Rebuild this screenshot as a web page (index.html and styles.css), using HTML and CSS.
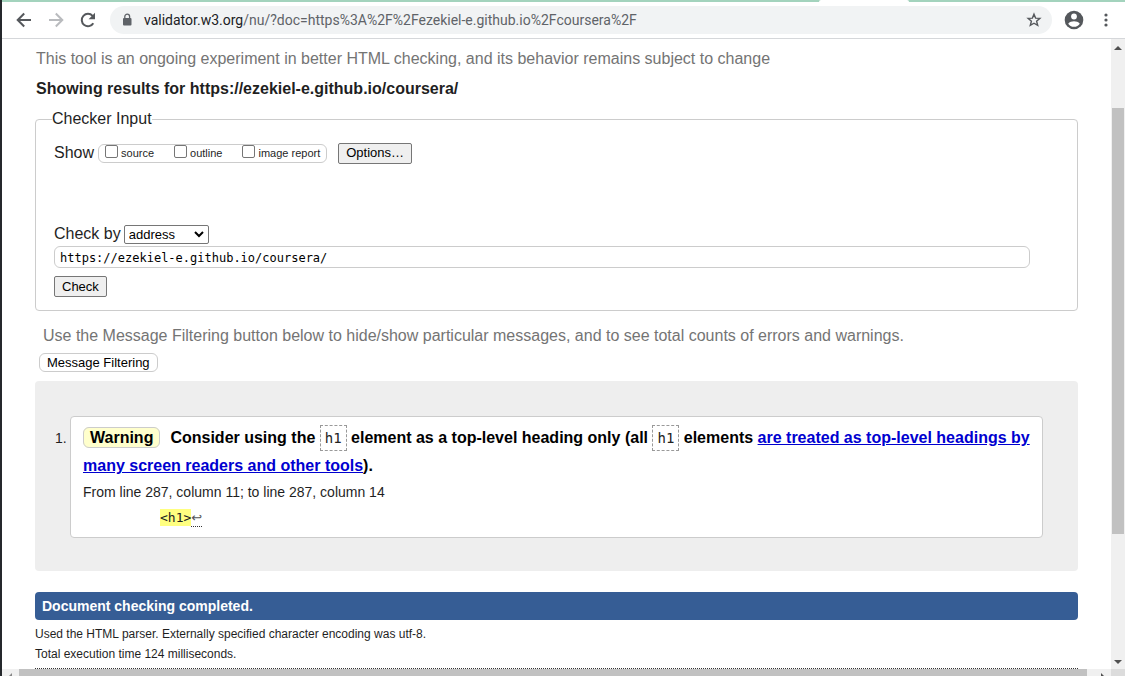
FILE: index.html
```html
<!DOCTYPE html>
<html lang="en">
<head>
<meta charset="utf-8">
<title>Showing results for https://ezekiel-e.github.io/coursera/</title>
<link rel="stylesheet" href="styles.css">
</head>
<body>
<div class="browser">
  <div class="tabstrip"><span class="tab-foot"></span></div>
  <header class="toolbar">
    <button class="tool back" aria-label="Back"><svg width="16" height="16" viewBox="0 0 16 16" fill="none" stroke="#55585c" stroke-width="2"><path d="M15 8H2M8.2 1.5L1.7 8l6.500 6.500"/></svg></button>
    <button class="tool forward" aria-label="Forward"><svg width="16" height="16" viewBox="0 0 16 16" fill="none" stroke="#b9bbbe" stroke-width="2"><path d="M1 8h13M7.800 1.500L14.300 8l-6.500 6.500"/></svg></button>
    <button class="tool reload" aria-label="Reload"><svg width="16" height="16" viewBox="0 0 16 16"><path d="M13.300 11.200A6.200 6.200 0 1 1 12.600 3.900L14 5.300" fill="none" stroke="#55585c" stroke-width="2"/><path d="M15 .8v6.400H8.600z" fill="#55585c"/></svg></button>
    <div class="omnibox">
      <svg width="10" height="14" viewBox="0 0 10 14"><rect x="1" y="5" width="8.500" height="7.500" rx="1" fill="#5f6368"/><path d="M2.800 5.500V3.600a2.400 2.400 0 0 1 4.800 0v1.900" fill="none" stroke="#5f6368" stroke-width="1.300"/></svg>
      <span class="url"><span class="host">validator.w3.org</span>/nu/?doc=https%3A%2F%2Fezekiel-e.github.io%2Fcoursera%2F</span>
      <button class="tool star" aria-label="Bookmark this page"><svg width="16" height="16" viewBox="0 0 16 16" fill="none" stroke="#55585c" stroke-width="1.400"><path d="M8 2.200l1.600 3.900 4.300.3-3.300 2.800 1.100 4.200L8 11.200l-3.700 2.200 1.100-4.200-3.300-2.800 4.300-.3z"/></svg></button>
    </div>
    <button class="tool person" aria-label="Profile"><svg width="20" height="20" viewBox="0 0 20 20"><circle cx="10" cy="10" r="9.300" fill="#55585c"/><circle cx="10" cy="6.500" r="2.900" fill="#fff"/><path d="M4.200 13.700c1.200-1.800 3.900-2.500 5.800-2.500s4.600.7 5.800 2.500c-1.200 1.900-3.300 3.100-5.800 3.100s-4.600-1.200-5.800-3.100z" fill="#fff"/></svg></button>
    <button class="tool menu" aria-label="Menu"><svg width="4" height="14" viewBox="0 0 4 14" fill="#55585c"><circle cx="2" cy="2" r="1.600"/><circle cx="2" cy="7" r="1.600"/><circle cx="2" cy="12" r="1.600"/></svg></button>
  </header>
  <div class="viewport">
    <main class="page">
      <p class="tagline">This tool is an ongoing experiment in better HTML checking, and its behavior remains subject to change</p>
      <h1 class="results-for">Showing results for https://ezekiel-e.github.io/coursera/</h1>
      <form>
        <fieldset class="checker">
          <legend>Checker Input</legend>
          <div class="show-row">
            <span>Show</span>
            <div class="checks">
              <label><input type="checkbox"><span>source</span></label>
              <label><input type="checkbox"><span>outline</span></label>
              <label><input type="checkbox"><span>image report</span></label>
            </div>
            <button type="button" class="btn options">Options…</button>
          </div>
          <div class="by-row">
            <label for="by">Check by</label>
            <span class="select-wrap"><select id="by"><option>address</option></select><svg class="chevron" width="10" height="7" viewBox="0 0 10 7" fill="none" stroke="#000" stroke-width="2"><path d="M1 1l4 4 4-4"/></svg></span>
          </div>
          <input class="doc" type="text" aria-label="Address" spellcheck="false" value="https://ezekiel-e.github.io/coursera/">
          <button type="button" class="btn">Check</button>
        </fieldset>
      </form>
      <p class="hint">Use the Message Filtering button below to hide/show particular messages, and to see total counts of errors and warnings.</p>
      <button type="button" class="filtering">Message Filtering</button>
      <section class="results">
        <span class="num">1.</span>
        <article class="message">
          <p class="headline"><strong class="badge">Warning</strong>Consider using the <code>h1</code> element as a top-level heading only (all <code>h1</code> elements <a href="#">are treated as top-level headings by many screen readers and other tools</a>).</p>
          <p class="location">From line 287, column 11; to line 287, column 14</p>
          <p class="extract"><mark>&lt;h1&gt;</mark><span class="lf">↩</span></p>
        </article>
      </section>
      <p class="done">Document checking completed.</p>
      <p class="detail">Used the HTML parser. Externally specified character encoding was utf-8.</p>
      <p class="detail">Total execution time 124 milliseconds.</p>
      <hr class="rule">
    </main>
    <div class="vbar"><i class="up"></i><span class="vthumb"></span><i class="down"></i></div>
  </div>
  <div class="hbar"><i class="left"></i><span class="hthumb"></span><i class="right"></i><span class="corner"></span></div>
</div>
</body>
</html>
```
FILE: styles.css
```css
* { box-sizing: border-box; }
body { margin: 0; font: 16px/20px "Liberation Sans", Arial, sans-serif; color: #1f1f1f; background: #fff; }
p, h1 { margin: 0; }
button, input, select { font-family: inherit; margin: 0; }
.browser { display: flex; flex-direction: column; height: 100vh; overflow: hidden; border-left: 2px solid #25282c; }

.tabstrip { flex: none; display: flex; justify-content: flex-end; height: 2px; background: #a3d3bd; }
.tab-foot { width: 90px; margin-right: 216px; background: #fff; border-radius: 2px 2px 0 0; }
.toolbar { flex: none; display: flex; align-items: center; height: 37px; padding: 0 17px 0 14px; border-bottom: 1px solid #d5d7da; }
.tool { display: flex; padding: 0; border: 0; background: none; }
.forward { margin-left: 16px; }
.reload { margin-left: 16px; }
.omnibox { flex: 1; display: flex; align-items: center; height: 28px; margin-left: 14px; padding: 0 10px 0 12px; border-radius: 14px; background: #f1f3f4; }
.url { flex: 1; margin-left: 12px; font: 14px/20px Roboto, "Open Sans", sans-serif; color: #5f6368; white-space: nowrap; }
.host { color: #202124; }
.person { margin-left: 12px; }
.menu { margin-left: 20px; }

.viewport { flex: 1; display: flex; min-height: 0; }
.page { flex: 1; min-width: 0; padding: 10px 33px 0; overflow: hidden; }
.tagline, .hint { color: #747474; }
.tagline, .results-for { padding-left: 1px; }
.results-for { margin-top: 10px; font-size: 16px; line-height: 20px; }
.checker { margin: 10px 0 0; padding: 13px 47px 13px 18px; border: 1px solid #ccc; border-radius: 4px; }
.checker legend { padding: 0; margin-left: -2px; }
.show-row { display: flex; align-items: center; height: 22px; }
.checks { display: flex; align-items: center; gap: 20px; height: 19px; margin-left: 4px; padding: 0 6px; border: 1px solid #ccc; border-radius: 6px; font-size: 11px; }
.checks label { display: flex; align-items: center; gap: 3px; }
.checks input { width: 13px; height: 13px; margin-bottom: 3px; appearance: none; border: 1px solid #767676; border-radius: 2px; background: #fff; }
.btn { display: block; height: 21px; padding: 0 7px; border: 1px solid #767676; border-radius: 2px; background: #efefef; font-size: 13px; line-height: 18px; color: #000; }
.options { margin-left: 11px; }
.by-row { display: flex; align-items: center; gap: 3px; margin-top: 60px; height: 20px; }
.select-wrap { display: grid; align-items: center; }
.select-wrap > * { grid-area: 1 / 1; }
.by-row select { width: 85px; height: 19px; padding: 0 4px; appearance: none; border: 1px solid #767676; border-radius: 2px; background: #fff; font-size: 13px; color: #000; }
.chevron { justify-self: end; margin-right: 5px; pointer-events: none; }
.doc { display: block; width: 100%; height: 22px; margin: 2px 0 8px; padding: 1px 5px 0; border: 1px solid #ccc; border-radius: 6px; font: 12px "DejaVu Sans Mono", monospace; color: #000; }
.hint { margin-top: 15px; padding-left: 8px; }
.filtering { display: block; height: 19px; margin: 7px 0 9px 4px; padding: 0 7px; border: 1px solid #ccc; border-radius: 6px; background: #fff; font-size: 13px; line-height: 17px; color: #000; }

.results { display: flex; padding: 35px 35px 33px 20px; border-radius: 4px; background: #eee; }
.num { width: 15px; padding-top: 12px; font-size: 14px; }
.message { flex: 1; min-width: 0; padding: 7px 8px 7px 12px; border: 1px solid #ccc; border-radius: 4px; background: #fff; color: #000; }
.headline { font-weight: bold; line-height: 28px; }
.badge { margin-right: 10px; padding: 1px 6px; border: 1px solid #ccc; border-radius: 6px; background: #ffc; }
.headline code { padding: 4px; border: 1px dashed #999; font: 14px "DejaVu Sans Mono", monospace; color: #222; }
.headline a { color: #0000d0; }
.location { margin-top: 1px; font-size: 14px; line-height: 22px; color: #1f1f1f; }
.extract { display: flex; align-items: center; margin-top: 2px; padding-left: 77px; height: 25px; font: 13px/17px "DejaVu Sans Mono", monospace; }
.extract mark { background: #ffff80; color: #222; }
.lf { border-bottom: 1px dotted #333; font-family: "DejaVu Sans", sans-serif; color: #555; }
.done { margin-top: 21px; padding: 4px 7px; border-radius: 4px; background: #365d95; font-size: 14px; font-weight: bold; color: #fff; }
.detail { font-size: 12px; }
.done + .detail { margin-top: 4px; }
.rule { margin: 4px 0 0; border: 0; border-top: 1px dotted #333; }

.vbar { flex: none; display: flex; flex-direction: column; align-items: center; width: 14px; padding: 7px 0 5px; background: #f0f0f0; }
.vthumb { width: 12px; height: 69%; margin-top: 58px; background: #c1c1c1; }
.up, .down { border: 4px solid transparent; }
.up { border-top: 0; border-bottom-color: #505050; }
.down { margin-top: auto; border-bottom: 0; border-top-color: #505050; }
.hbar { flex: none; display: flex; height: 7px; padding-left: 7px; background: #f0f0f0; }
.left { width: 10px; }
.left::before, .right::before { content: ""; display: block; margin-top: 4px; border: 3px solid transparent; }
.left::before { width: 0; border-left: 0; border-right-color: #888; }
.right::before { width: 0; border-right: 0; border-left-color: #505050; }
.hthumb { flex: 1; background: #c1c1c1; }
.right { width: 24px; padding-left: 14px; }
.corner { width: 14px; background: #dcdcdc; }
```
